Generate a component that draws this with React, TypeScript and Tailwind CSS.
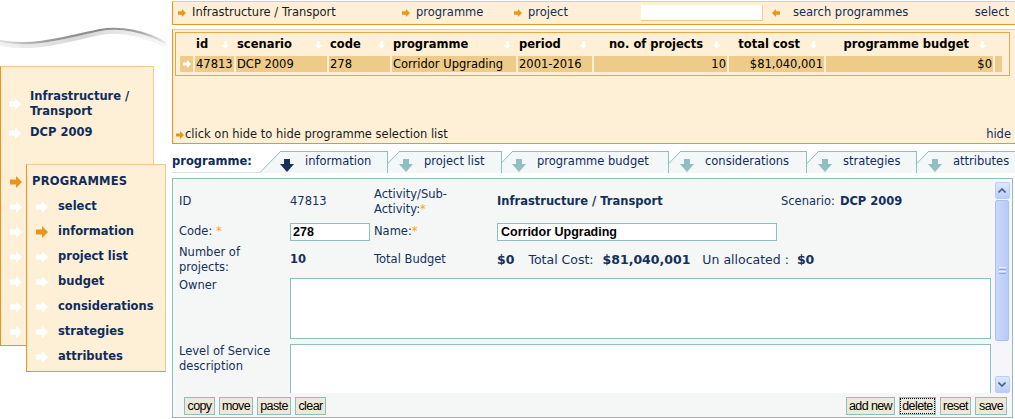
import React from 'react';

// small block arrows used all over the page
function ArrowRight({ className }: { className?: string }) {
  return (
    <svg viewBox="0 0 12 12" className={className}>
      <path d="M0 3.5h6V0l6 6-6 6V8.5H0z" fill="currentColor" />
    </svg>
  );
}

function ArrowLeft({ className }: { className?: string }) {
  return (
    <svg viewBox="0 0 12 12" className={className}>
      <path d="M12 3.5H6V0L0 6l6 6V8.5h6z" fill="currentColor" />
    </svg>
  );
}

function SortArrow() {
  return (
    <svg viewBox="0 0 7 8" className="w-[7px] h-[8px] shrink-0 text-white">
      <path d="M2 0h3v4h2L3.5 8 0 4h2z" fill="currentColor" />
    </svg>
  );
}

function TabArrow({ className }: { className?: string }) {
  return (
    <svg viewBox="0 0 14 13" className={className}>
      <path d="M4 0h6v5h4l-7 8-7-8h4z" fill="currentColor" />
    </svg>
  );
}

function Swoosh() {
  return (
    <svg viewBox="0 0 172 66" className="w-[172px] h-[66px]">
      <defs>
        <linearGradient id="sw" x1="0" x2="1" y1="0" y2="0">
          <stop offset="0" stopColor="#dddddd" />
          <stop offset="0.3" stopColor="#9a9a9a" />
          <stop offset="0.6" stopColor="#888888" />
          <stop offset="0.85" stopColor="#a8a8a8" />
          <stop offset="1" stopColor="#eeeeee" />
        </linearGradient>
        <linearGradient id="sh" x1="0" x2="1" y1="0" y2="0">
          <stop offset="0" stopColor="#f2f2f2" />
          <stop offset="0.5" stopColor="#d6d6d6" />
          <stop offset="1" stopColor="#fafafa" />
        </linearGradient>
      </defs>
      <path d="M0 44 C35 51 70 39 100 33 C122 29 146 35 166 46" stroke="url(#sh)" strokeWidth="4" fill="none" />
      <path d="M0 41 C35 48 70 36 100 30 C122 26 146 32 166 43" stroke="url(#sw)" strokeWidth="2.2" fill="none" />
    </svg>
  );
}

const navOuter = ['select', 'information', 'project list', 'budget', 'considerations', 'strategies'];
const navInner = ['select', 'information', 'project list', 'budget', 'considerations', 'strategies', 'attributes'];

function LeftNav() {
  return (
    <aside className="w-[172px] shrink-0 flex flex-col">
      <Swoosh />
      <div className="w-[154px] h-[280px] bg-[#fef0d6] border-l border-b border-l-[#e8961f] border-b-[#e8961f] border-t border-r border-t-[#f2ca8b] border-r-[#f2ca8b] pt-[22px] font-bold text-[#0e2c5c] text-[11.5px]">
        <div className="flex items-center">
          <ArrowRight className="w-[12px] h-[12px] text-white ml-[8px] mr-[9px] shrink-0" />
          <span className="leading-[15px]">Infrastructure /<br />Transport</span>
        </div>
        <div className="flex items-center mt-[6px]">
          <ArrowRight className="w-[12px] h-[12px] text-white ml-[8px] mr-[9px] shrink-0" />
          <span className="leading-[15px]">DCP 2009</span>
        </div>
        <div className="flex mt-[24px]">
          <div className="w-[25px] shrink-0 flex flex-col pt-[5px]">
            <div className="h-[25px] flex items-center">
              <ArrowRight className="w-[12px] h-[12px] text-[#e8951e] ml-[9px]" />
            </div>
            {navOuter.map((n) => (
              <div key={n} className="h-[25px] flex items-center">
                <ArrowRight className="w-[12px] h-[12px] text-white ml-[9px]" />
              </div>
            ))}
          </div>
          <div className="w-[140px] shrink-0 bg-[#fef0d6] border-l border-b border-l-[#e8961f] border-b-[#e8961f] border-t border-r border-t-[#f2ca8b] border-r-[#f2ca8b] pt-[4px] pb-[2px]">
            <div className="h-[25px] flex items-center pl-[5px] tracking-[0.2px]">PROGRAMMES</div>
            {navInner.map((n) => (
              <div key={n} className="h-[25px] flex items-center">
                <ArrowRight
                  className={`w-[12px] h-[12px] ml-[9px] mr-[10px] ${n === 'information' ? 'text-[#e8951e]' : 'text-white'}`}
                />
                <span>{n}</span>
              </div>
            ))}
          </div>
        </div>
      </div>
    </aside>
  );
}

function TopBar() {
  return (
    <div className="mt-[1px] h-[24px] bg-[#fef0d6] border-l border-b border-l-[#e8961f] border-b-[#e8961f] border-t border-t-[#f2ca8b] flex items-center text-[11.5px] text-[#0e2c5c]">
      <ArrowRight className="w-[8px] h-[8px] text-[#e8951e] ml-[5px]" />
      <span className="ml-[6px] w-[206px] text-[#1a1a1a]">Infrastructure / Transport</span>
      <ArrowRight className="w-[8px] h-[8px] text-[#e8951e] ml-[4px]" />
      <span className="ml-[6px] w-[98px]">programme</span>
      <ArrowRight className="w-[8px] h-[8px] text-[#e8951e]" />
      <span className="ml-[6px] w-[113px]">project</span>
      <div className="w-[122px] h-[16px] bg-white border-r border-b border-[#f2ca8b]" />
      <ArrowLeft className="w-[8px] h-[8px] text-[#e8951e] ml-[9px]" />
      <span className="ml-[13px]">search programmes</span>
      <span className="ml-auto mr-[9px]">select</span>
    </div>
  );
}

const cols = [
  { w: 'w-[13px]', label: '', value: '' },
  { w: 'w-[39px]', label: 'id', value: '47813' },
  { w: 'w-[91px]', label: 'scenario', value: 'DCP 2009' },
  { w: 'w-[61px]', label: 'code', value: '278' },
  { w: 'w-[124px]', label: 'programme', value: 'Corridor Upgrading' },
  { w: 'w-[74px]', label: 'period', value: '2001-2016' },
  { w: 'w-[133px]', label: 'no. of projects', value: '10', right: true },
  { w: 'w-[95px]', label: 'total cost', value: '$81,040,001', right: true },
  { w: 'w-[167px]', label: 'programme budget', value: '$0', right: true },
  { w: 'w-[7px]', label: '', value: '' },
];

function SelectionPanel() {
  return (
    <div className="mt-[4px] h-[115px] bg-[#fef0d6] border-l border-b border-l-[#e8961f] border-b-[#e8961f] border-t border-t-[#f2ca8b] flex flex-col pt-[2px] pl-[2px]">
      <div className="w-[835px] border border-[#eaa84c] pl-[4px] pb-[3px] text-[11.5px] text-black">
        <div className="flex gap-[2px] h-[22px] pt-[2px] items-center font-bold">
          {cols.map((c, i) =>
            c.label ? (
              <div
                key={i}
                className={`${c.w} shrink-0 flex items-center ${c.right ? 'justify-end gap-[10px] pr-[7px]' : 'justify-between pl-[1px] pr-[5px]'}`}
              >
                <span>{c.label}</span>
                <SortArrow />
              </div>
            ) : (
              <div key={i} className={`${c.w} shrink-0`} />
            ),
          )}
        </div>
        <div className="flex gap-[2px] h-[16px] mt-[1px]">
          {cols.map((c, i) => (
            <div
              key={i}
              className={`${c.w} shrink-0 bg-[#eecb89] leading-[16px] whitespace-nowrap overflow-hidden ${c.right ? 'text-right pr-[1px]' : 'pl-[1px]'} ${i === 0 ? 'flex items-center justify-center' : ''}`}
            >
              {i === 0 ? (
                <svg viewBox="0 0 8 8" className="w-[8px] h-[8px] text-white">
                  <path d="M0 2.5h4V0l4 4-4 4V5.5H0z" fill="currentColor" />
                </svg>
              ) : (
                c.value
              )}
            </div>
          ))}
        </div>
      </div>
      <div className="mt-auto mb-[1px] flex items-center text-[11.5px] leading-[15px]">
        <svg viewBox="0 0 8 8" className="w-[8px] h-[8px] text-[#e8951e] ml-[1px]">
          <path d="M0 2.5h4V0l4 4-4 4V5.5H0z" fill="currentColor" />
        </svg>
        <span className="ml-[1px] text-[#1a1a1a]">click on hide to hide programme selection list</span>
        <span className="ml-auto mr-[7px] text-[#0e2c5c]">hide</span>
      </div>
    </div>
  );
}

const tabs = [
  { label: 'information', w: 'w-[108px]', ml: '', z: 'z-[60]', active: true },
  { label: 'project list', w: 'w-[103px]', ml: '-ml-[9px]', z: 'z-[50]' },
  { label: 'programme budget', w: 'w-[157px]', ml: '-ml-[10px]', z: 'z-[40]' },
  { label: 'considerations', w: 'w-[127px]', ml: '-ml-[9px]', z: 'z-[30]' },
  { label: 'strategies', w: 'w-[99px]', ml: '-ml-[9px]', z: 'z-[20]' },
  { label: 'attributes', w: 'w-[90px]', ml: '-ml-[9px]', z: 'z-[10]' },
];

function Tabs() {
  return (
    <div className="mt-[7px] h-[22px] flex text-[11.5px]">
      <div className="w-[88px] shrink-0 border-b border-[#d3e5e6] font-bold text-[#0e2c5c] text-[11.5px] leading-[20px]">
        programme:
      </div>
      {tabs.map((t) => (
        <div key={t.label} className={`relative ${t.z} ${t.ml} flex shrink-0`}>
          <svg viewBox="0 0 20 22" className="w-[20px] h-[22px] shrink-0">
            <polygon points="0,22 20,0 20,22" fill="#f4f7f7" />
            <line x1="0" y1="21.5" x2="20.5" y2="0.5" stroke="#8dbec0" strokeWidth="1" />
          </svg>
          <div className={`${t.w} h-[22px] bg-[#f4f7f7] border-t border-r border-[#8dbec0] flex`}>
            <TabArrow
              className={`w-[14px] h-[13px] self-end mb-[1px] shrink-0 ${t.active ? 'text-[#1b2d5b]' : 'text-[#8fbfc1]'}`}
            />
            <span className="ml-[11px] pt-[3px] leading-[13px] text-[#0e2c5c] whitespace-nowrap">{t.label}</span>
          </div>
        </div>
      ))}
    </div>
  );
}

function Scrollbar() {
  return (
    <div className="w-[16px] h-[211px] mt-[3px] bg-[#f6f6fa] flex flex-col items-center">
      <div className="w-[15px] h-[17px] rounded-[2px] border border-[#b9cdf8] bg-gradient-to-b from-[#dfe8fd] to-[#b9cdf9] flex items-center justify-center">
        <svg viewBox="0 0 8 5" className="w-[8px] h-[5px]">
          <path d="M0.5 4.5 4 1l3.5 3.5" stroke="#4d6185" strokeWidth="1.6" fill="none" />
        </svg>
      </div>
      <div className="w-[14px] h-[141px] mt-[1px] rounded-[2px] border border-[#a9bff5] bg-gradient-to-r from-[#c9d8fc] to-[#b7cbf8] flex flex-col items-center justify-center gap-[1px]">
        <div className="w-[7px] h-[1px] bg-[#eef3ff]" />
        <div className="w-[7px] h-[1px] bg-[#8fa8e0]" />
        <div className="w-[7px] h-[1px] bg-[#eef3ff]" />
        <div className="w-[7px] h-[1px] bg-[#8fa8e0]" />
      </div>
      <div className="flex-1" />
      <div className="w-[15px] h-[17px] rounded-[2px] border border-[#b9cdf8] bg-gradient-to-b from-[#dfe8fd] to-[#b9cdf9] flex items-center justify-center">
        <svg viewBox="0 0 8 5" className="w-[8px] h-[5px]">
          <path d="M0.5 0.5 4 4l3.5-3.5" stroke="#4d6185" strokeWidth="1.6" fill="none" />
        </svg>
      </div>
    </div>
  );
}

function Btn({ w, children, focus }: { w: string; children: React.ReactNode; focus?: boolean }) {
  return (
    <div
      className={`${w} h-[18px] shrink-0 bg-[#ece9d8] border border-[#8dbec0] flex items-center justify-center font-['Liberation_Sans',Arial,sans-serif] text-[12.5px] tracking-[-0.6px] text-black`}
    >
      <span className={focus ? 'outline outline-1 outline-dotted outline-black px-[1px] leading-[14px]' : 'leading-[14px]'}>
        {children}
      </span>
    </div>
  );
}

const Star = () => <span className="text-[#f2a41d]">*</span>;

function Form() {
  return (
    <div className="mt-[5px] w-[841px] h-[240px] border border-[#8dbec0] bg-[#f5f7f7] flex flex-col text-[11.5px] text-[#14305a]">
      <div className="flex h-[214px]">
        <div className="flex-1 overflow-hidden pl-[6px] pt-[8px]">
          <div className="grid grid-cols-[111px_84px_123px_1fr]">
            <div className="h-[30px] flex items-center">ID</div>
            <div className="h-[30px] flex items-center">47813</div>
            <div className="h-[30px] flex items-center leading-[15px]">
              <span>
                Activity/Sub-
                <br />
                Activity:<Star />
              </span>
            </div>
            <div className="h-[30px] flex items-center">
              <span className="w-[284px] font-bold">Infrastructure / Transport</span>
              <span>Scenario:</span>
              <span className="ml-[5px] font-bold">DCP 2009</span>
            </div>

            <div className="mt-[6px] h-[18px] flex items-center">
              Code:&nbsp;<Star />
            </div>
            <div className="mt-[6px] h-[18px]">
              <div className="w-[80px] h-[18px] bg-white border border-[#8dbec0] pl-[2px] font-['Liberation_Sans',Arial,sans-serif] font-bold text-[12.5px] leading-[16px] text-black">
                278
              </div>
            </div>
            <div className="mt-[6px] h-[18px] flex items-center">
              Name:<Star />
            </div>
            <div className="mt-[6px] h-[18px]">
              <div className="w-[280px] h-[18px] bg-white border border-[#8dbec0] pl-[3px] font-['Liberation_Sans',Arial,sans-serif] font-bold text-[12.5px] leading-[16px] text-black">
                Corridor Upgrading
              </div>
            </div>

            <div className="mt-[4px] h-[30px] flex items-center leading-[15px]">
              <span>
                Number of
                <br />
                projects:
              </span>
            </div>
            <div className="mt-[4px] h-[30px] flex items-center font-bold">10</div>
            <div className="mt-[4px] h-[30px] flex items-center">Total Budget</div>
            <div className="mt-[4px] h-[30px] flex items-center text-[12.5px]">
              <span className="font-bold">$0</span>
              <span className="ml-[14px]">Total Cost:</span>
              <span className="ml-[9px] font-bold">$81,040,001</span>
              <span className="ml-[12px]">Un allocated :</span>
              <span className="ml-[8px] font-bold">$0</span>
            </div>

            <div className="mt-[3px] leading-[15px]">Owner</div>
            <div className="mt-[3px] col-span-3">
              <div className="w-[701px] h-[61px] bg-white border border-[#8dbec0]" />
            </div>

            <div className="mt-[5px] leading-[15px]">
              Level of Service
              <br />
              description
            </div>
            <div className="mt-[5px] col-span-3">
              <div className="w-[701px] h-[60px] bg-white border border-[#8dbec0]" />
            </div>
          </div>
        </div>
        <Scrollbar />
        <div className="w-[2px]" />
      </div>
      <div className="flex-1 flex pt-[4px] pl-[11px] pr-[5px] gap-[4px]">
        <Btn w="w-[31px]">copy</Btn>
        <Btn w="w-[34px]">move</Btn>
        <Btn w="w-[34px]">paste</Btn>
        <Btn w="w-[31px]">clear</Btn>
        <div className="flex-1" />
        <Btn w="w-[49px]">add new</Btn>
        <Btn w="w-[37px]" focus>
          delete
        </Btn>
        <Btn w="w-[31px]">reset</Btn>
        <Btn w="w-[32px]">save</Btn>
      </div>
    </div>
  );
}

export default function App() {
  return (
    <div className="w-[1015px] h-[419px] bg-white overflow-hidden flex font-['DejaVu_Sans',Verdana,sans-serif]">
      <LeftNav />
      <main className="w-[846px] shrink-0 flex flex-col">
        <TopBar />
        <SelectionPanel />
        <Tabs />
        <Form />
      </main>
    </div>
  );
}
